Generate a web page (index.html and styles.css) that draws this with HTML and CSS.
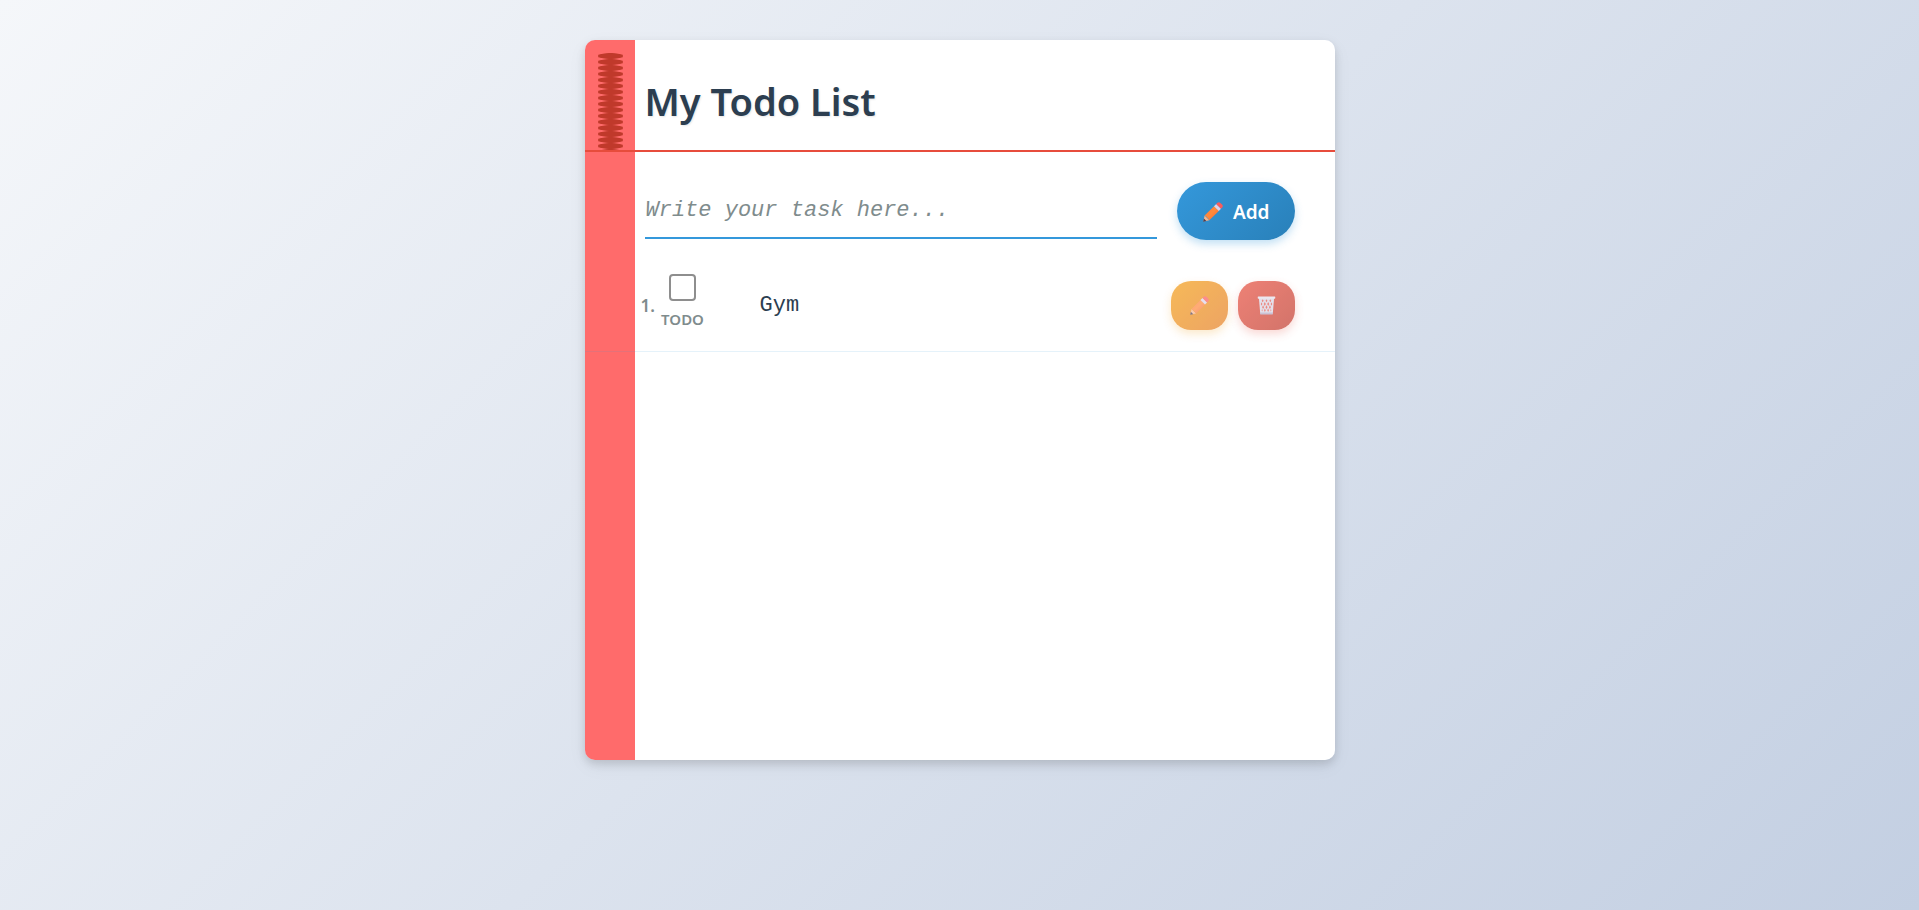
FILE: index.html
```html
<!DOCTYPE html>
<html lang="en">
<head>
<meta charset="UTF-8">
<meta name="viewport" content="width=device-width, initial-scale=1">
<title>My Todo List</title>
<link rel="stylesheet" href="styles.css">
</head>
<body>
<svg class="sprite" aria-hidden="true">
  <defs>
    <linearGradient id="wood" x1="0" y1="0" x2="1" y2="1">
      <stop offset="0" stop-color="#ff7a3d"/>
      <stop offset="0.5" stop-color="#ff8a3c"/>
      <stop offset="1" stop-color="#f0603a"/>
    </linearGradient>
    <symbol id="pencil" viewBox="0 0 20 20">
      <path fill="#f9b48a" d="M0.4 19.6 1.6 13.6 6.3 18.3Z"/>
      <path fill="#4a3b4e" d="M0.2 19.8 0.9 16.6 3.4 19.1Z"/>
      <path fill="url(#wood)" d="M1.6 13.6 11.3 3.9 16.1 8.7 6.3 18.3Q5.6 17 4.6 16.1 3.2 14.5 1.6 13.6Z"/>
      <path fill="#dcd3ea" d="M11 4.2 13.2 2 18 6.8 15.8 9Z"/>
      <path fill="#fb5c5c" d="M13.2 2 14.4 0.8Q15.9-0.4 17.4 0.9L19.1 2.6Q20.4 4.1 19.2 5.6L18 6.8Z"/>
    </symbol>
    <symbol id="basket" viewBox="0 0 20 20">
      <path fill="#d9d3e2" d="M2 2H18L16.6 18.8H3.4Z"/>
      <path fill="#e4574b" d="M6 3.4 7 5 6 6.6 5 5ZM10 3.4 11 5 10 6.6 9 5ZM14 3.4 15 5 14 6.6 13 5ZM4.8 6.6 5.6 8.4 4.8 10.2 4 8.4ZM8.2 6.2 9.3 8.4 8.2 10.6 7.1 8.4ZM11.8 6.2 12.9 8.4 11.8 10.6 10.7 8.4ZM15.2 6.6 16 8.4 15.2 10.2 14.4 8.4ZM6.4 9.8 7.4 11.8 6.4 13.8 5.4 11.8ZM10 9.8 11.1 11.8 10 13.8 8.9 11.8ZM13.6 9.8 14.6 11.8 13.6 13.8 12.6 11.8ZM8.3 13.2 9.2 15 8.3 16.8 7.4 15ZM11.7 13.2 12.6 15 11.7 16.8 10.8 15ZM5.4 13.6 5.9 15 5.4 16.4 4.9 15ZM14.6 13.6 15.1 15 14.6 16.4 14.1 15Z"/>
      <path fill="#e4dfeb" d="M0.8 1Q0.8 0.4 1.4 0.4H18.6Q19.2 0.4 19.2 1V2.2Q19.2 2.8 18.6 2.8H1.4Q0.8 2.8 0.8 2.2Z"/>
      <path fill="#b5aac4" d="M3.2 17.4H16.8L16.5 19.6H3.5Z"/>
    </symbol>
  </defs>
</svg>
<main class="notebook">
  <header class="notebook-header">
    <h1 class="title">My Todo List</h1>
  </header>
  <form class="task-form">
    <input class="task-input" type="text" placeholder="Write your task here..." aria-label="New task">
    <button class="add-button" type="button"><svg class="add-icon" aria-hidden="true"><use href="#pencil"/></svg>Add</button>
  </form>
  <ol class="task-list">
    <li class="task">
      <span class="task-number">1.</span>
      <label class="task-status"><input class="task-check" type="checkbox"><span>TODO</span></label>
      <span class="task-text">Gym</span>
      <div class="task-actions">
        <button class="action edit" type="button" aria-label="Edit task"><svg class="action-icon" aria-hidden="true"><use href="#pencil"/></svg></button>
        <button class="action delete" type="button" aria-label="Delete task"><svg class="action-icon" aria-hidden="true"><use href="#basket"/></svg></button>
      </div>
    </li>
  </ol>
</main>
</body>
</html>
```

FILE: styles.css
```css
* {
  box-sizing: border-box;
}

body {
  margin: 0;
  min-height: 100vh;
  padding: 40px 20px;
  background: linear-gradient(135deg, #f5f7fa 0%, #c3cfe2 100%);
  font-family: "Segoe UI", "Noto Sans", sans-serif;
  color: #2c3e50;
}

.sprite {
  position: absolute;
  width: 0;
  height: 0;
}

.notebook {
  max-width: 750px;
  margin: 0 auto;
  overflow: hidden;
  border-radius: 10px;
  background: linear-gradient(to right, #ff6b6b 50px, #fff 50px);
  box-shadow: 0 4px 8px rgba(0, 0, 0, 0.13), 0 6px 20px rgba(0, 0, 0, 0.05);
}

.notebook-header {
  position: relative;
  padding: 31px 40px 19px 60px;
  border-bottom: 2px solid #e74c3c;
}

.notebook-header::before {
  content: "";
  position: absolute;
  top: 13px;
  bottom: 0;
  left: 13px;
  width: 25px;
  background: radial-gradient(14px 3px at center, #c0392b 84%, transparent 104%) 0 0 / 25px 6px repeat-y;
}

.title {
  margin: 0;
  font-size: 38px;
  line-height: 60px;
  font-weight: 600;
  text-shadow: 1px 1px 2px rgba(0, 0, 0, 0.1);
}

.task-form {
  display: flex;
  align-items: center;
  gap: 20px;
  padding: 30px 40px 20px 60px;
}

.task-input {
  flex: 1;
  min-width: 0;
  padding: 15px 1px 14px;
  border: 0;
  border-bottom: 2px solid #3498db;
  background: transparent;
  color: #2c3e50;
  font-family: "Courier New", "Liberation Mono", monospace;
  font-size: 22px;
  outline: 0;
}

.task-input::placeholder {
  color: #7f8c8d;
  font-style: italic;
}

.add-button {
  display: flex;
  align-items: center;
  justify-content: center;
  gap: 10px;
  padding: 16px 25px 14px 26px;
  border: 0;
  border-radius: 30px;
  background: linear-gradient(135deg, #3498db, #2980b9);
  box-shadow: 0 4px 8px rgba(52, 152, 219, 0.3);
  color: #fff;
  font-family: inherit;
  font-size: 19px;
  line-height: 28px;
  font-weight: 600;
}

.add-icon {
  width: 20px;
  height: 20px;
}

.task-list {
  min-height: 500px;
  margin: 0;
  padding: 0;
  list-style: none;
}

.task {
  display: flex;
  align-items: center;
  min-height: 92px;
  padding: 14px 40px 14px 56px;
  border-bottom: 1px solid rgba(52, 152, 219, 0.13);
}

.task-number {
  width: 21px;
  color: #7f8c8d;
  font-size: 17px;
  font-weight: 600;
}

.task-status {
  display: flex;
  flex-direction: column;
  align-self: flex-start;
  align-items: center;
  gap: 7px;
  width: 42px;
  color: #7f8c8d;
  font-size: 15px;
  line-height: 23px;
  font-weight: 600;
}

.task-check {
  appearance: none;
  width: 27px;
  height: 27px;
  margin: 0;
  border: 2px solid #8e8e8e;
  border-radius: 4px;
  background: #fff;
}

.task-check:checked {
  background: #3498db;
}

.task-text {
  flex: 1;
  min-width: 0;
  margin-left: 56px;
  font-family: "Courier New", "Liberation Mono", monospace;
  font-size: 22px;
}

.task-actions {
  display: flex;
  gap: 10px;
}

.action {
  display: flex;
  align-items: center;
  justify-content: center;
  padding: 15px 18px;
  border: 0;
  border-radius: 20px;
  opacity: 0.7;
}

.action-icon {
  width: 21px;
  height: 19px;
}

.edit {
  background: linear-gradient(135deg, #f39c12, #e67e22);
  box-shadow: 0 4px 8px rgba(243, 156, 18, 0.3);
}

.delete {
  background: linear-gradient(135deg, #e74c3c, #c0392b);
  box-shadow: 0 4px 8px rgba(231, 76, 60, 0.3);
}
```
